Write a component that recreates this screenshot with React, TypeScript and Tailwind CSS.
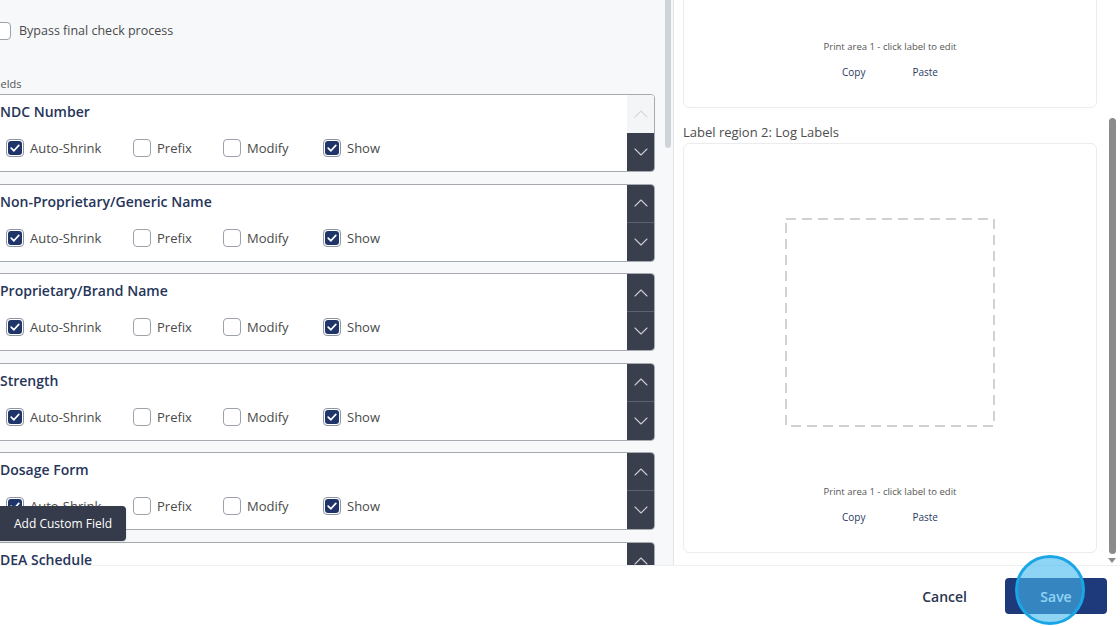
import { ChevronUp, ChevronDown } from 'lucide-react'

interface FieldRow {
  name: string
  autoShrink: boolean
  prefix: boolean
  modify: boolean
  show: boolean
}

const fields: FieldRow[] = [
  { name: 'NDC Number', autoShrink: true, prefix: false, modify: false, show: true },
  { name: 'Non-Proprietary/Generic Name', autoShrink: true, prefix: false, modify: false, show: true },
  { name: 'Proprietary/Brand Name', autoShrink: true, prefix: false, modify: false, show: true },
  { name: 'Strength', autoShrink: true, prefix: false, modify: false, show: true },
  { name: 'Dosage Form', autoShrink: true, prefix: false, modify: false, show: true },
  { name: 'DEA Schedule', autoShrink: true, prefix: false, modify: false, show: true },
]

function Checkbox({ checked }: { checked: boolean }) {
  if (checked) {
    return (
      <div className="w-[18px] h-[18px] rounded-[4px] border border-[#8c93a2] bg-white p-[1px] flex-shrink-0">
        <div className="w-full h-full rounded-[3px] bg-[#1f3468] flex items-center justify-center">
          <svg width="12" height="12" viewBox="0 0 12 12" fill="none">
            <path d="M2.2 6.2 L4.9 8.8 L9.8 3.4" stroke="white" strokeWidth="1.7" strokeLinecap="round" strokeLinejoin="round" />
          </svg>
        </div>
      </div>
    )
  }
  return <div className="w-[18px] h-[18px] rounded-[4px] border border-[#9da2aa] bg-white flex-shrink-0" />
}

function Option({ label, checked, className }: { label: string; checked: boolean; className?: string }) {
  return (
    <div className={`flex items-center ${className ?? ''}`}>
      <Checkbox checked={checked} />
      <span className="ml-[6px] text-[13px] leading-[18px] text-[#4a4a4a]">{label}</span>
    </div>
  )
}

function FieldCard({ field, first }: { field: FieldRow; first: boolean }) {
  return (
    <div className="h-[78px] flex border border-[#a7abb1] rounded-[4px] bg-white overflow-hidden">
      <div className="flex-1 pt-[7px]">
        <h4 className="pl-[11px] text-[14px] leading-[20px] font-semibold text-[#263559]">{field.name}</h4>
        <div className="flex items-center pl-[17px] mt-[17px]">
          <Option label="Auto-Shrink" checked={field.autoShrink} className="w-[127px]" />
          <Option label="Prefix" checked={field.prefix} className="w-[90px]" />
          <Option label="Modify" checked={field.modify} className="w-[100px]" />
          <Option label="Show" checked={field.show} />
        </div>
      </div>
      <div className="w-[27px] flex flex-col">
        {first ? (
          <button className="h-[38px] bg-[#f4f5f7] flex items-center justify-center">
            <ChevronUp className="h-[24px] w-[24px] text-[#d6d9de]" strokeWidth={1.1} />
          </button>
        ) : (
          <button className="h-[38px] bg-[#3a3f4d] flex items-center justify-center border-b border-[#5d6271]">
            <ChevronUp className="h-[24px] w-[24px] text-[#c9ccd3]" strokeWidth={1.1} />
          </button>
        )}
        <button className="flex-1 bg-[#3a3f4d] flex items-center justify-center">
          <ChevronDown className="h-[24px] w-[24px] text-[#c9ccd3]" strokeWidth={1.1} />
        </button>
      </div>
    </div>
  )
}

function PrintCard({ className, children }: { className: string; children?: React.ReactNode }) {
  return (
    <div className={`bg-white border border-[#ececee] rounded-[6px] flex flex-col items-center ${className}`}>
      {children}
      <div className="flex-1" />
      <p className="text-[9.5px] leading-[16px] text-[#555]">Print area 1 - click label to edit</p>
      <div className="mt-[9px] mb-[27px] h-[16px] flex items-center gap-[47px] text-[10px] font-medium text-[#2b3a63]">
        <span>Copy</span>
        <span>Paste</span>
      </div>
    </div>
  )
}

export default function App() {
  return (
    <div
      className="w-[1120px] h-[626px] flex flex-col bg-white overflow-hidden relative"
      style={{ fontFamily: '"Open Sans", "Noto Sans", sans-serif' }}
    >
      <div className="h-[565px] flex">
        {/* Left: field list */}
        <div className="w-[674px] flex bg-[#f7f8fa] border-r border-[#e3e5e8]">
          <div className="flex-1 overflow-hidden relative">
            <div className="-ml-[12px] pt-[22px] pr-[8px]">
              <div className="flex items-center pl-[5px]">
                <Checkbox checked={false} />
                <span className="ml-[8px] text-[12.5px] leading-[18px] text-[#4a4a4a]">Bypass final check process</span>
              </div>
              <p className="mt-[37px] mb-[3px] pl-[4px] text-[11px] leading-[14px] text-[#555]">Fields</p>
              <div className="flex flex-col gap-[11.5px]">
                {fields.map((f, i) => (
                  <FieldCard key={f.name} field={f} first={i === 0} />
                ))}
              </div>
            </div>
            {/* Add Custom Field floating button */}
            <div className="absolute left-[-6px] top-[506px] w-[132px] h-[35px] bg-[#353b4b] rounded-[4px] flex items-center pl-[20px] shadow">
              <span className="text-[12px] text-white font-medium">Add Custom Field</span>
            </div>
          </div>
          <div className="w-[10px] pl-[2px]">
            <div className="w-[6px] h-[148px] bg-[#cfd4db] rounded-b-[3px]" />
          </div>
        </div>

        {/* Right: label preview */}
        <div className="flex-1 flex">
          <div className="flex-1 pl-[9px] pr-[7px]">
            <PrintCard className="h-[148px] -mt-[40px]" />
            <p className="mt-[15px] mb-[2px] text-[13px] leading-[18px] text-[#4d4d4d]">Label region 2: Log Labels</p>
            <PrintCard className="h-[410px]">
              <svg width="210" height="209" viewBox="0 0 210 209" className="mt-[74px]">
                <rect x="1" y="1" width="208" height="207" fill="none" stroke="#a3a3a3" strokeWidth="1" strokeDasharray="10 6" />
              </svg>
            </PrintCard>
          </div>
          <div className="w-[16px] flex flex-col items-center pt-[118px]">
            <div className="w-[7px] h-[436px] bg-[#8b8b8b] rounded-full" />
            <svg width="8" height="5" viewBox="0 0 8 5" className="mt-[4px]">
              <path d="M0 0 L8 0 L4 5 Z" fill="#8b8b8b" />
            </svg>
          </div>
        </div>
      </div>

      {/* Footer */}
      <div className="flex-1 border-t border-[#eef0f2] flex items-center justify-end pr-[13px]">
        <span className="mr-[38px] text-[14px] font-semibold text-[#2a3550]">Cancel</span>
        <button className="w-[102px] h-[36px] bg-[#1f3a7b] rounded-[4px] text-[14px] font-semibold text-white">Save</button>
      </div>

      {/* click highlight */}
      <div className="absolute left-[1015px] top-[555px] w-[70px] h-[70px] rounded-full border-[3px] border-[#1aa6e6] bg-[#43b7ee]/60" />
    </div>
  )
}
